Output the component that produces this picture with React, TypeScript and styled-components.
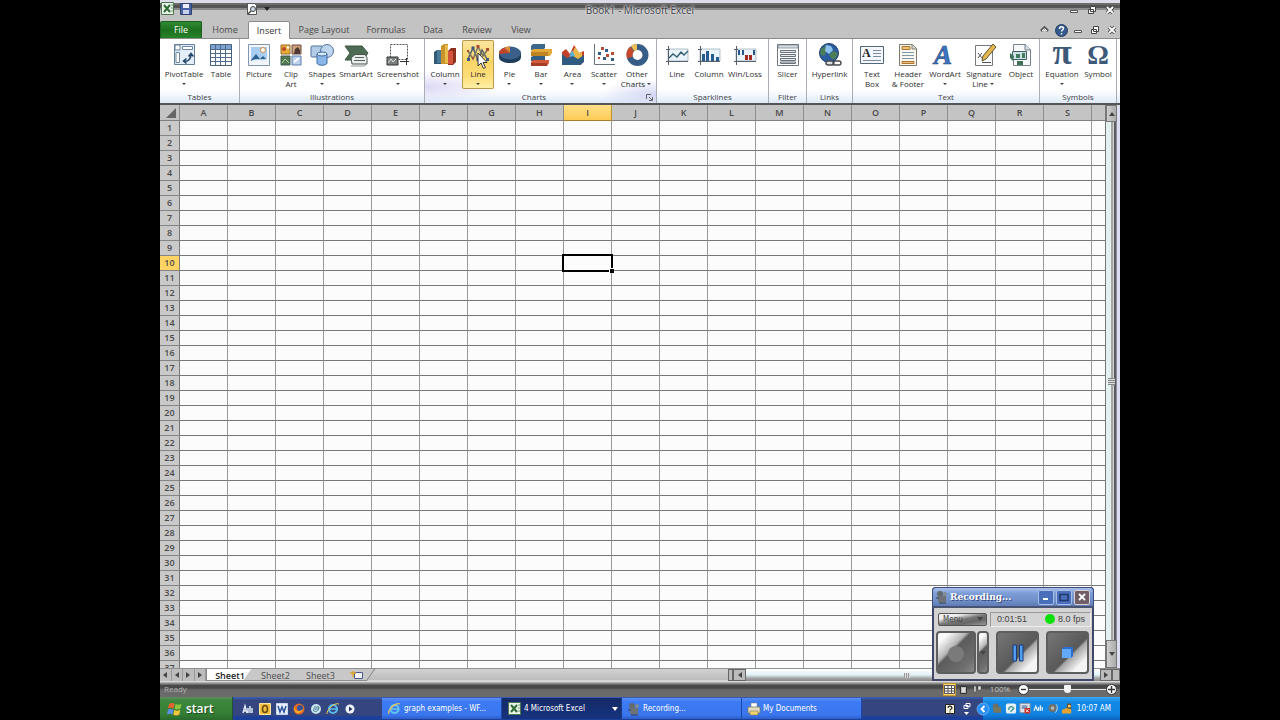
import React from 'react';
import styled, { createGlobalStyle, css } from 'styled-components';

const ui = '"Open Sans", "Noto Sans", sans-serif';
const xp = '"DejaVu Sans Condensed", "DejaVu Sans", sans-serif';

const Global = createGlobalStyle`
  * { box-sizing: border-box; }
  html, body { margin: 0; background: #000; }
  body { font-family: ${ui}; font-size: 8px; line-height: 10px; color: #333; overflow: hidden; }
  button { font: inherit; color: inherit; border: 0; padding: 0; margin: 0; background: none; }
  svg { display: block; flex: none; overflow: visible; }
`;

const Screen = styled.main`
  position: relative;
  display: flex;
  flex-direction: column;
  width: 75%;
  height: 100vh;
  margin: 0 auto;
  background: #c3c3c3;
  overflow: hidden;
`;

/* ---------- title bar ---------- */
const TitleBar = styled.header`
  display: grid;
  grid-template-columns: 1fr auto 1fr;
  align-items: center;
  height: 20px;
  background: linear-gradient(#dcdcea 0 3px, #6c6c6c 3px 5px, #555 5px 8px, #8b8b8b 8px 10px, #c3c3c3 10px);
`;
const QuickTools = styled.div`
  display: flex;
  align-items: center;
  gap: 6px;
  height: 20px;
  padding: 0 1px 3px;
`;
const ToolGap = styled.span`
  width: 42px;
`;
const Title = styled.h1`
  margin: 0;
  font-size: 10px;
  line-height: 14px;
  font-weight: 400;
  color: #3f3f49;
  text-shadow: 0 0 2px #ddd, 0 0 2px #ddd, 0 0 3px #ccc;
`;
const WindowButtons = styled.div`
  display: flex;
  justify-content: flex-end;
  align-items: center;
  gap: 6px;
  padding-right: 4px;
`;
const GlyphButton = styled.button`
  display: grid;
  place-items: center;
  width: 12px;
  height: 12px;
`;

/* ---------- ribbon ---------- */
const TabBar = styled.nav`
  display: flex;
  align-items: flex-end;
  height: 19px;
  border-bottom: 1px solid #8c8c8c;
`;
const RibbonTab = styled.button<{ $w: number; $kind?: 'file' | 'active' }>`
  width: ${p => p.$w}px;
  height: 17px;
  font-size: 9px;
  line-height: 17px;
  text-align: center;
  color: #4a4a4a;
  ${p => p.$kind === 'file' && css`
    color: #fff;
    background: linear-gradient(#2f8a33, #1c701f 50%, #278429);
    border: 1px solid #1b5e1e;
    border-bottom: 0;
    border-radius: 2px 2px 0 0;
    line-height: 16px;
  `}
  ${p => p.$kind === 'active' && css`
    height: 18px;
    margin-bottom: -1px;
    color: #333;
    background: #fff;
    border: 1px solid #8c8c8c;
    border-bottom: 0;
    border-radius: 2px 2px 0 0;
  `}
`;
const TabTools = styled.div`
  display: flex;
  align-items: center;
  gap: 5px;
  height: 17px;
  margin-left: auto;
  padding-right: 2px;
`;
const Ribbon = styled.section`
  display: flex;
  height: 66px;
  background: linear-gradient(#fff 0 50px, #f3f7fd 56px, #dfebf8 63px);
  border-bottom: 2px solid #555;
`;
const Group = styled.section<{ $w: number; $glow?: boolean }>`
  position: relative;
  display: flex;
  flex-direction: column;
  flex: none;
  width: ${p => p.$w}px;
  border-right: 1px solid #a9adb5;
  ${p => p.$glow && css`
    background:
      radial-gradient(ellipse 75px 16px at 0 48px, #dcd8f5, transparent),
      radial-gradient(ellipse 55px 16px at 100% 56px, #d3d6f4, transparent);
  `}
`;
const GroupButtons = styled.div<{ $pad?: number }>`
  display: flex;
  height: 53px;
  padding: 1px 0 0 ${p => p.$pad ?? 1}px;
`;
const GroupName = styled.h2<{ $launcher?: boolean }>`
  margin: 0;
  padding-right: ${p => (p.$launcher ? '13px' : '0')};
  font-size: 8px;
  line-height: 10px;
  font-weight: 400;
  text-align: center;
  color: #444;
`;
const Launcher = styled.button`
  position: absolute;
  right: 3px;
  bottom: 2px;
  width: 7px;
  height: 7px;
`;
const Tool = styled.button<{ $w: number; $hot?: boolean }>`
  position: relative;
  display: flex;
  flex-direction: column;
  align-items: center;
  flex: none;
  width: ${p => p.$w}px;
  height: 49px;
  padding-top: 3px;
  white-space: nowrap;
  border-radius: 2px;
  ${p => p.$hot && css`
    background: linear-gradient(#fbe6a2, #fbd566 45%, #fdde7c 75%, #fdf0a8);
    box-shadow: inset 0 0 0 1px #b99a4c;
  `}
`;
const ToolLabel = styled.span`
  display: block;
  padding-top: 2px;
  line-height: 10px;
  text-align: center;
  color: #2e2e2e;
`;
const Caret = styled.i`
  display: inline-block;
  width: 0;
  height: 0;
  margin: 2px 2px;
  border: 2px solid transparent;
  border-top-color: #444;
  border-bottom: 0;
`;
const Cursor = styled.svg`
  position: absolute;
  left: 15px;
  top: 12px;
`;

/* ---------- grid ---------- */
const Workspace = styled.div`
  display: flex;
  flex: 1;
  min-height: 0;
`;
const GridArea = styled.div`
  flex: 1;
  min-width: 0;
  overflow: hidden;
  background: #fcfcfc;
`;
const Sheet = styled.table`
  width: 100%;
  table-layout: fixed;
  border-collapse: separate;
  border-spacing: 0;
`;
const ColHead = styled.th<{ $on?: boolean; $first?: boolean }>`
  width: ${p => (p.$first ? '20px' : '48px')};
  height: 16px;
  padding: 0;
  font-size: 9px;
  line-height: 15px;
  font-weight: 600;
  color: #4a4a4a;
  background: ${p => (p.$on ? 'linear-gradient(#ffe08a, #fdcb55)' : '#c4c4c4')};
  border-right: 1px solid ${p => (p.$on ? '#c09236' : '#8e8e8e')};
  border-bottom: 1px solid ${p => (p.$on ? '#a87e2c' : '#808080')};
  &:last-child { width: auto; border-right: 0; }
`;
const RowHead = styled.th<{ $on?: boolean }>`
  height: 15px;
  padding: 0;
  font-size: 9px;
  line-height: 14px;
  font-weight: 600;
  color: #4a4a4a;
  background: ${p => (p.$on ? '#ffd465' : '#c9c9c9')};
  border-right: 1px solid #777;
  border-bottom: 1px solid #858585;
`;
const Cell = styled.td`
  position: relative;
  height: 15px;
  padding: 0;
  border-right: 1px solid #999;
  border-bottom: 1px solid #777;
  &:last-child { border-right: 0; }
`;
const Selection = styled.div`
  position: absolute;
  inset: -2px;
  z-index: 1;
  border: 2px solid #000;
  &::after {
    content: '';
    position: absolute;
    right: -3px;
    bottom: -3px;
    width: 4px;
    height: 4px;
    background: #000;
    box-shadow: -1px -1px 0 #fff;
  }
`;
const VScroll = styled.div`
  display: flex;
  flex-direction: column;
  align-items: stretch;
  flex: none;
  width: 15px;
  border-left: 1px solid #777;
  background: linear-gradient(90deg, #e4f1f1 0 5px, #a5a5a5 5px 7px, #d0d0d0 7px 8px, #5b5b62 8px 10px, #8e8e9a 10px 11px, #dcdcf0 11px);
`;
const VArrow = styled.button<{ $h: number }>`
  display: grid;
  place-items: center;
  width: 11px;
  height: ${p => p.$h}px;
  background: linear-gradient(90deg, #cfcfcf, #aaa);
  border: 1px solid #777;
`;
const Grip = styled.span`
  width: 7px;
  height: 7px;
  margin: auto auto auto 2px;
  background: repeating-linear-gradient(#888 0 1px, #ddd 1px 2px);
`;

/* ---------- sheet tabs ---------- */
const SheetBar = styled.div`
  display: flex;
  flex: none;
  height: 15px;
  border-top: 1px solid #909090;
  background: linear-gradient(#d2d2d2, #bcbcbc 11px, #eee 12px, #999 14px);
`;
const SheetNav = styled.div`
  display: flex;
  z-index: 1;
  width: 47px;
  height: 12px;
  background: #bdbdbd;
  border-right: 1px solid #888;
`;
const NavButton = styled.button`
  display: grid;
  place-items: center;
  flex: 1;
  border-right: 1px solid #999;
`;
const SheetTab = styled.button<{ $on?: boolean; $w: number }>`
  position: relative;
  isolation: isolate;
  width: ${p => p.$w}px;
  height: 12px;
  font-size: 9px;
  line-height: 11px;
  font-weight: ${p => (p.$on ? 600 : 400)};
  color: ${p => (p.$on ? '#222' : '#4c4c4c')};
  &::before {
    content: '';
    position: absolute;
    inset: 0 0 0 -6px;
    z-index: -1;
    transform: skewX(-35deg);
    background: ${p => (p.$on ? '#fff' : '#c8c8c8')};
    border-right: 1px solid #808080;
    border-bottom: 1px solid #909090;
  }
`;
const HScroll = styled.div`
  display: flex;
  width: 392px;
  height: 12px;
  margin-left: auto;
`;
const HThumb = styled.div`
  display: grid;
  place-items: center;
  flex: 1;
  background: linear-gradient(#fff, #e0f0f4 6px, #a8a8a8 9px, #888);
`;
const HGrip = styled.span`
  width: 6px;
  height: 5px;
  margin-right: 32px;
  background: repeating-linear-gradient(90deg, #999 0 1px, #ddd 1px 2px);
`;
const HArrow = styled.button<{ $w: number }>`
  display: grid;
  place-items: center;
  width: ${p => p.$w}px;
  background: #bbb;
  border: 1px solid #666;
`;

/* ---------- status bar ---------- */
const StatusBar = styled.footer`
  display: flex;
  align-items: center;
  flex: none;
  height: 14px;
  padding: 0 3px 2px 4px;
  color: #c0c0c0;
  background: linear-gradient(#8a8a8a 0 1px, #484848 2px 5px, #6a6a6a 7px);
`;
const ReadyText = styled.span`
  color: #b0b0b0;
`;
const ViewButtons = styled.div`
  display: flex;
  gap: 1px;
  margin-left: auto;
`;
const ViewButton = styled.button<{ $on?: boolean }>`
  display: grid;
  place-items: center;
  width: 13px;
  height: 13px;
  background: ${p => (p.$on ? '#ffd76a' : 'transparent')};
  border: ${p => (p.$on ? '1px solid #c49a3a' : '0')};
`;
const ZoomText = styled.span`
  width: 26px;
  margin: 0 5px 0 3px;
  text-align: center;
`;
const RoundButton = styled.button`
  display: grid;
  place-items: center;
  width: 11px;
  height: 11px;
  border: 1px solid #333;
  border-radius: 50%;
  background: #fff;
`;
const ZoomRange = styled.input`
  appearance: none;
  width: 77px;
  height: 11px;
  margin: 0;
  background: linear-gradient(transparent 5px, #e4e4e4 5px 6px, transparent 6px);
  &::-webkit-slider-thumb {
    appearance: none;
    width: 7px;
    height: 8px;
    background: #f4f4f4;
    border-radius: 1px 1px 4px 4px;
  }
`;

/* ---------- recorder ---------- */
const Recorder = styled.aside`
  position: absolute;
  right: 26px;
  bottom: 39px;
  z-index: 2;
  width: 162px;
  height: 94px;
  display: flex;
  flex-direction: column;
  background: #d3d3d3;
  border: 2px solid #3f4668;
  border-top: 0;
  border-radius: 4px 4px 0 0;
`;
const RecTitle = styled.header`
  display: flex;
  align-items: center;
  gap: 2px;
  height: 21px;
  padding: 0 3px;
  border: 1px solid #3d4c7c;
  border-bottom: 2px solid #495472;
  border-radius: 4px 4px 0 0;
  margin: 0 -2px;
  background: linear-gradient(#a9c0ea, #7c9cd6 30%, #7493cc 60%, #5f7cb6);
`;
const RecName = styled.h2`
  flex: 1;
  margin: 0;
  font: 700 9px/14px "DejaVu Serif", serif;
  color: #fff;
  text-shadow: 1px 1px 0 #37497e;
`;
const RecBox = styled.button<{ $close?: boolean }>`
  display: grid;
  place-items: center;
  width: 16px;
  height: 15px;
  background: ${p => (p.$close ? '#705d66' : '#496fba')};
  border: 1px solid ${p => (p.$close ? '#d8d0d8' : '#a8bfe8')};
  border-radius: 2px;
`;
const RecInfo = styled.div`
  display: flex;
  align-items: center;
  gap: 3px;
  height: 22px;
  padding: 0 1px 0 4px;
`;
const MenuButton = styled.button`
  display: flex;
  align-items: center;
  justify-content: space-between;
  width: 49px;
  height: 13px;
  padding: 0 3px 0 4px;
  font: 8px/11px ${xp};
  color: #444;
  background: linear-gradient(168deg, #eee 25%, #777 50%, #666 70%, #999);
  border: 1px solid #555;
  border-radius: 2px;
`;
const RecReadout = styled.div`
  display: flex;
  align-items: center;
  gap: 3px;
  flex: 1;
  height: 15px;
  padding: 0 5px 0 6px;
  font: 9px/13px "Liberation Sans", sans-serif;
  color: #444;
  border: 1px solid #999;
  border-right-color: #eee;
  border-bottom-color: #eee;
`;
const Lamp = styled.i`
  width: 10px;
  height: 10px;
  margin-left: auto;
  border-radius: 50%;
  background: #0be00b;
`;
const RecKeys = styled.div`
  display: flex;
  flex: 1;
  gap: 7px;
  padding: 1px 3px 5px 2px;
`;
const RecPair = styled.div`
  display: flex;
  gap: 1px;
  width: 53px;
`;
const RecKey = styled.button<{ $grow?: boolean; $flip?: boolean }>`
  display: grid;
  place-items: center;
  flex: ${p => (p.$grow ? '1' : '0 0 12px')};
  background: ${p => p.$flip
    ? 'linear-gradient(135deg, #777, #585858 56%, #a5a5a5 60%, #f4f4f4 82%)'
    : 'linear-gradient(135deg, #fafafa 14%, #b5b5b5 38%, #5c5c5c 44%, #6e6e6e 80%, #8a8a8a)'};
  border: 2px solid #5e5e5e;
  border-radius: 4px;
`;

/* ---------- taskbar ---------- */
const Taskbar = styled.nav`
  display: flex;
  flex: none;
  height: 23px;
  font: 8px/18px ${xp};
  color: #fff;
  background: linear-gradient(#3b5cae 0 1px, #34457f 3px 18px, #1d3f9c 20px);
`;
const StartButton = styled.button`
  display: flex;
  align-items: center;
  gap: 4px;
  width: 73px;
  height: 23px;
  padding-left: 8px;
  font: 600 12px/20px ${ui};
  color: #fff;
  text-shadow: 1px 1px 1px #1c4a1c;
  background: linear-gradient(#5d8e5d, #3c853c 4px, #368036 16px, #2a6a2c);
  border-right: 1px solid #234f3a;
`;
const QuickLaunch = styled.div`
  display: flex;
  align-items: center;
  gap: 5px;
  width: 149px;
  padding-left: 9px;
`;
const Launch = styled.button`
  width: 12px;
  height: 12px;
`;
const Task = styled.button<{ $on?: boolean }>`
  display: flex;
  align-items: center;
  gap: 3px;
  flex: 0 1 120px;
  height: 21px;
  margin-top: 1px;
  padding: 0 3px 0 6px;
  white-space: nowrap;
  background: ${p => (p.$on ? 'linear-gradient(#152a66, #17337f)' : 'linear-gradient(#5b8ef8, #3c7bf4 4px, #3a76ee 17px, #2b5dc8)')};
  border-right: 1px solid ${p => (p.$on ? '#1c3a86' : '#1f48ab')};
`;
const TaskEnd = styled.span`
  margin-left: auto;
`;
const DeskTools = styled.div`
  display: flex;
  align-items: center;
  gap: 8px;
  margin-left: auto;
  padding-right: 12px;
`;
const Tray = styled.div`
  display: flex;
  align-items: center;
  gap: 2px;
  width: 137px;
  padding-right: 9px;
  background: linear-gradient(#3aa6f2, #1389e6 5px, #1184e2 17px, #0d62bd);
`;
const TrayToggle = styled.button`
  width: 12px;
  height: 14px;
  margin-left: -6px;
`;
const Clock = styled.time`
  margin-left: auto;
  white-space: nowrap;
`;

/* ---------- icons ---------- */
const frame = { width: 24, height: 24, viewBox: '0 0 24 24' };
const navy = '#3c5a78';

const art: Record<string, React.ReactNode> = {
  pivot: <><path d="M2.500 1.500h20v20h-20z" fill="#e4eef8" stroke="#65809a" /><path d="M3 2h5v5H3z" fill="#fff" stroke="#65809a" /><path d="M10.500 3.500h10v3h-10zM4 9.500h3.500v10H4z" fill="#fff" stroke="#6f879e" /><path d="M12 18c4 1 7-2 7-7m-2.500 2.500L19 10.500l2.500 3M14.500 15.500L11.500 18l3 2.500" stroke="#27486d" strokeWidth="1.600" fill="none" /></>,
  table: <><path d="M1.500 1.500h21v21h-21z" fill="#fff" stroke="#46607c" /><path d="M2 2h20v4H2z" fill="#7da2cf" /><path d="M2 6.500h20M2 10.500h20M2 14.500h20M2 18.500h20M6.500 2v20M11.500 2v20M16.500 2v20" stroke="#526b88" /></>,
  picture: <><path d="M1.500 1.500h21v21h-21z" fill="#f3f7fb" stroke="#8197ad" /><path d="M4 4h16v15H4z" fill="#a9cdf0" /><path d="M4 17l5-6 4 5 3-3 4 4v2H4z" fill="#2e6192" /><path d="M4 18c5-3 9-1 16-2v3H4z" fill="#e8f2fa" /><circle cx="16" cy="7" r="2.500" fill="#fff" stroke="#d58a3c" /></>,
  clip: <><path d="M2 2h9v9H2z" fill="#e8ad38" stroke="#9a6b23" /><circle cx="5" cy="6" r="2" fill="#b94628" /><circle cx="9" cy="4.500" r="1.300" fill="#fff" /><path d="M13 2h9v9h-9z" fill="#cfa17b" stroke="#6b4a38" /><path d="M15 11l1-5 3-2 2 3v4z" fill="#4d3a36" /><path d="M2 13h9v9H2z" fill="#4f7850" stroke="#3c5a52" /><path d="M3 20l3-4 4 4" stroke="#b8d0a8" fill="none" /><path d="M13 13h9v9h-9z" fill="#b8d2f0" stroke="#5e7fa5" /><path d="M15 19l5-4" stroke="#fff" strokeWidth="2" /></>,
  shapes: <><rect x="1" y="3" width="12" height="11" rx="1" fill="#b2cce8" stroke="#51739b" /><circle cx="17" cy="8" r="6.500" fill="#bed5ef" stroke="#51739b" /><path d="M7 11v9c0 3 10 3 10 0v-9" fill="#8bb7e8" stroke="#3e6a9c" /><ellipse cx="12" cy="11" rx="5" ry="2" fill="#d8e9fa" stroke="#3e6a9c" /></>,
  smart: <><path d="M1 3h17l6 7-5 7H1l5-7z" fill="#4c6b52" stroke="#3a5540" /><path d="M7 15l4-3.500h10l2 3V21H8z" fill="#e8ecec" stroke="#46564c" /><path d="M11 14.500h9M10 17.500h11" stroke="#56635b" /><path d="M7 23h13l3-2" stroke="#8c9690" fill="none" /></>,
  shot: <><path d="M4.500 1.500h17v15h-17z" fill="none" stroke="#555" strokeDasharray="2 1" /><path d="M1 14h11v8H1z" fill="#7b807d" stroke="#333" /><path d="M2 20l3-4 2 3 3-3" stroke="#dfe5df" fill="none" /><path d="M14 18.500h9M20.500 15v7" stroke="#333" /></>,
  column: <><path d="M1 9l3-2h4v14H1z" fill="#315a79" /><path d="M4 7h4v13H4z" fill="#4b7a99" /><path d="M8 3l3-2h4v20H8z" fill="#c9952b" /><path d="M12 2h3v18h-3z" fill="#e8bc4e" /><path d="M15 8l3-3h5v14l-3 3h-5z" fill="#8f2f1d" /><path d="M15 8h5v13h-5z" fill="#d2543a" /></>,
  line: <><path d="M2 16l5-11 5 12 4-10 6 11" stroke="#54606d" strokeWidth="1.500" fill="none" /><path d="M2 8l5 8 5-12 5 9 5-7" stroke="#7a7563" strokeWidth="1.500" fill="none" /><path d="M1 15h3v3H1zM5.500 3.500h3v3h-3zM10.500 15h3v3h-3zM20 15h3v3h-3z" fill="#3c5b7d" /><path d="M1 7h2v2H1zM10.500 2h3v3h-3zM20 5h3v3h-3zM6 14h2v2H6z" fill="#a94c33" /></>,
  pie: <><path d="M1 10v4c0 8 22 8 22 0v-4z" fill="#1f3d5c" /><ellipse cx="12" cy="10" rx="11" ry="6.500" fill="#395f8a" /><path d="M12 10L1 11c-.5-3 2-5 6-6.500z" fill="#c34527" /><path d="M12 10L6 4.600c2-.8 4-1.100 6-1.100z" fill="#d98a3a" /></>,
  bar: <><path d="M2 3l2-2h12v4l-2 2H2z" fill="#3c668b" /><path d="M2 8l2-2h19v4l-2 3H2z" fill="#e0a93a" /><path d="M2 9h17v4H2z" fill="#bd8424" /><path d="M2 14l2-1h12v4l-2 1H2z" fill="#345e83" /><path d="M2 19l2-2h16v3l-2 3H2z" fill="#d45a3c" /><path d="M2 20h16v3H2z" fill="#a83d25" /></>,
  area: <><path d="M1 20V9l4-3 4 5 4-9 5 8 5-2v10l-3 4z" fill="#c5402a" /><path d="M9 16l5-12 4 6 3-1v8z" fill="#e9b848" /><path d="M8 14l3-7 3 6z" fill="#5bb2d8" /><path d="M1 11l5 4 6-2 5 3 6-4v7l-4 3H1z" fill="#2f5a82" /></>,
  scatter: <><path d="M2.500 1v20.500H23" stroke="#67727e" fill="none" /><path d="M6 9h3v3H6zM13 6h3v3h-3zM11 14h3v3h-3zM19 15h3v3h-3z" fill="#375b87" /><path d="M9 4h3v3H9zM19 9h3v3h-3zM6 14h2v2H6zM14 11h3v3h-3z" fill="#bd4c37" /></>,
  donut: <><circle cx="12.500" cy="12" r="8" fill="none" stroke="#365c88" strokeWidth="6" /><path d="M5 14.500A8 8 0 0 1 7 6" stroke="#c9482c" strokeWidth="6" fill="none" /><path d="M7.500 5.500a8 8 0 0 1 4.500-1.500" stroke="#edc052" strokeWidth="6" fill="none" /></>,
  sline: <><path d="M3 6h20v12H3z" fill="#e9f3fa" stroke="#98a6b2" strokeWidth=".7" /><path d="M3.500 3v19M1 18.500h22M1 6.500h4" stroke="#56616d" /><path d="M4 15l4-4 4 3 4-5 3 3 4-4" stroke="#365f73" strokeWidth="1.400" fill="none" /></>,
  scol: <><path d="M3 6h20v12H3z" fill="#e9f3fa" stroke="#98a6b2" strokeWidth=".7" /><path d="M3.500 3v19M1 18.500h22M1 6.500h4" stroke="#56616d" /><path d="M5 11h3v7H5zM9 8h3v10H9zM14 11h3v7h-3zM19 14h3v4h-3z" fill="#275b91" /></>,
  winloss: <><path d="M3 6h20v12H3z" fill="#e9f3fa" stroke="#98a6b2" strokeWidth=".7" /><path d="M3.500 3v19M1 18.500h22M1 6.500h4" stroke="#56616d" /><path d="M5 7h2v5H5zM9 7h2v5H9zM20 7h2v5h-2z" fill="#2b5689" /><path d="M12 12h3v5h-3zM16 12h3v5h-3z" fill="#a62820" /></>,
  slicer: <><path d="M1.500 1.500h21v21h-21z" fill="#fff" stroke="#707982" /><path d="M2 2h20v3H2z" fill="#d8dee4" stroke="#707982" strokeWidth=".7" /><path d="M4.500 7.500h15v2h-15zM4.500 11.500h15v2h-15zM4.500 15.500h15v2h-15zM4.500 19h15v1.500h-15z" fill="#e9edf2" stroke="#66717b" /></>,
  link: <><circle cx="11" cy="10" r="9.500" fill="#2b5ca0" stroke="#1d3e68" /><path d="M3 6l6-4 3 2-3 4-3 5-4-2zM11 12l4-4 5 2-3 6h-3z" fill="#4c7f55" /><path d="M8 2l5 1 2 4-4 4-4-3z" fill="#8dc2ee" /><rect x="8" y="18" width="8" height="4" rx="2" fill="#ddd" stroke="#454b50" strokeWidth="1.400" /><rect x="15" y="18" width="8" height="4" rx="2" fill="none" stroke="#454b50" strokeWidth="1.400" /></>,
  textbox: <><path d="M.5 3.500h23v17H.5z" fill="#f4f8fc" stroke="#50677e" /><text x="2" y="14" fontSize="12" fontFamily="Liberation Serif" fontWeight="700" fill="#222">A</text><path d="M13 7.500h8M13 10.500h8M13 13.500h8M3 17.500h18" stroke="#7b8ca0" /></>,
  header: <><path d="M3.500 1.500h13l4 4v17h-17z" fill="#fbf8ef" stroke="#7f7a6c" /><path d="M6 3.500h8v3H6zM6 18.500h12v2H6z" fill="#f0bf72" stroke="#ab7734" /><path d="M16 1v5h4" fill="#ddd" stroke="#7f7a6c" /><path d="M6 9.500h12M6 12.500h12M6 15.500h12" stroke="#7e99ac" /></>,
  wordart: <text x="1" y="21" fontSize="27" fontFamily="Liberation Serif" fontStyle="italic" fontWeight="700" fill="#3c75c5" stroke="#244875" strokeWidth=".6">A</text>,
  sign: <><path d="M3.500 2.500h17v20h-17z" fill="#fdfdfd" stroke="#74797e" /><path d="M6 10l4 5M6 15l4-5M10 19.500h9" stroke="#555" /><path d="M21 1l3 3-10 12-4 2 1-5z" fill="#e5b84d" stroke="#5f5436" /></>,
  object: <><path d="M4.500 1.500h12l5 5v16h-17z" fill="#f6f8fa" stroke="#78828c" /><path d="M16 1v6h6" fill="#d5dde5" stroke="#78828c" /><path d="M3.500 8.500h14v8h-14z" fill="#cfe0e6" stroke="#3e5e62" /><path d="M7 11h4v4H7zM13 10h3v5h-3z" fill="#3f7a5a" /><path d="M1 10l4 3-1 5-3-3zM8 18h6v4H8z" fill="#3d7259" /></>,
  pi: <text x="12" y="21" textAnchor="middle" fontSize="35" fontFamily="Liberation Serif" fontWeight="700" fill={navy}>π</text>,
  omega: <text x="12" y="21" textAnchor="middle" fontSize="27" fontFamily="Liberation Serif" fontWeight="700" fill={navy}>Ω</text>,
};

type ToolSpec = { icon: string; top: string; bottom?: string; caret?: boolean; w: number; hot?: boolean };
type GroupSpec = { name: string; w: number; pad?: number; tools: ToolSpec[] };

const groups: GroupSpec[] = [
  { name: 'Tables', w: 80, pad: 2, tools: [
    { icon: 'pivot', top: 'PivotTable', caret: true, w: 44 },
    { icon: 'table', top: 'Table', w: 30 }] },
  { name: 'Illustrations', w: 185, pad: 2, tools: [
    { icon: 'picture', top: 'Picture', w: 34 },
    { icon: 'clip', top: 'Clip', bottom: 'Art', w: 30 },
    { icon: 'shapes', top: 'Shapes', caret: true, w: 32 },
    { icon: 'smart', top: 'SmartArt', w: 36 },
    { icon: 'shot', top: 'Screenshot', caret: true, w: 48 }] },
  { name: 'Charts', w: 232, pad: 3, tools: [
    { icon: 'column', top: 'Column', caret: true, w: 34 },
    { icon: 'line', top: 'Line', caret: true, w: 32, hot: true },
    { icon: 'pie', top: 'Pie', caret: true, w: 31 },
    { icon: 'bar', top: 'Bar', caret: true, w: 32 },
    { icon: 'area', top: 'Area', caret: true, w: 31 },
    { icon: 'scatter', top: 'Scatter', caret: true, w: 32 },
    { icon: 'donut', top: 'Other', bottom: 'Charts', caret: true, w: 34 }] },
  { name: 'Sparklines', w: 112, pad: 4, tools: [
    { icon: 'sline', top: 'Line', w: 32 },
    { icon: 'scol', top: 'Column', w: 32 },
    { icon: 'winloss', top: 'Win/Loss', w: 40 }] },
  { name: 'Filter', w: 38, pad: 0, tools: [{ icon: 'slicer', top: 'Slicer', w: 37 }] },
  { name: 'Links', w: 46, pad: 0, tools: [{ icon: 'link', top: 'Hyperlink', w: 45 }] },
  { name: 'Text', w: 187, pad: 3, tools: [
    { icon: 'textbox', top: 'Text', bottom: 'Box', w: 32 },
    { icon: 'header', top: 'Header', bottom: '& Footer', w: 40 },
    { icon: 'wordart', top: 'WordArt', caret: true, w: 34 },
    { icon: 'sign', top: 'Signature', bottom: 'Line', caret: true, w: 44 },
    { icon: 'object', top: 'Object', w: 30 }] },
  { name: 'Symbols', w: 77, pad: 2, tools: [
    { icon: 'pi', top: 'Equation', caret: true, w: 40 },
    { icon: 'omega', top: 'Symbol', w: 32 }] },
];

const MinGlyph = () => <svg width="10" height="10" viewBox="0 0 10 10"><path d="M1.500 5.500h7v2h-7z" fill="#fff" stroke="#555" /></svg>;
const RestoreGlyph = () => <svg width="10" height="10" viewBox="0 0 10 10"><path d="M3.500 1.500h5v5h-5zM1.500 4.500h5v4h-5z" fill="#fff" stroke="#444" /></svg>;
const CloseGlyph = ({ edge = '#444' }: { edge?: string }) => (
  <svg width="10" height="10" viewBox="0 0 10 10">
    <path d="M2 2l6 6M8 2L2 8" stroke={edge} strokeWidth="3.500" />
    <path d="M2 2l6 6M8 2L2 8" stroke="#fff" strokeWidth="1.800" />
  </svg>
);
const ExcelGlyph = ({ size = 13 }: { size?: number }) => (
  <svg width={size} height={size} viewBox="0 0 13 13">
    <path d="M.5.500h12v12H.5z" fill="#e9f2e7" stroke="#4c7550" />
    <path d="M3 3l6 7M9 3l-6 7" stroke="#2d6b35" strokeWidth="2" /><path d="M10 3h2M10 6h2M10 9h2" stroke="#6a9a6a" />
  </svg>
);
const IeGlyph = () => (
  <svg width="13" height="13" viewBox="0 0 13 13">
    <circle cx="6.500" cy="7" r="4" fill="none" stroke="#64c4f0" strokeWidth="2.200" />
    <path d="M4 7h6" stroke="#64c4f0" strokeWidth="1.600" /><path d="M1 12C-1 8 8 0 12 2" fill="none" stroke="#e5c75a" strokeWidth="1.200" />
  </svg>
);
const Tri = ({ d, fill = '#444' }: { d: 'up' | 'down' | 'left' | 'right'; fill?: string }) => {
  const shape = { up: 'M0 5h6L3 1z', down: 'M0 1h6L3 5z', left: 'M5 0v6L1 3z', right: 'M1 0v6l4-3z' }[d];
  return <svg width="6" height="6" viewBox="0 0 6 6"><path d={shape} fill={fill} /></svg>;
};
const CamGlyph = () => (
  <svg width="12" height="14" viewBox="0 0 12 14"><circle cx="4" cy="4" r="3" fill="#636a70" /><circle cx="9" cy="4" r="2" fill="#848b92" /><path d="M2 6h8v6H2z" fill="#6d7278" /><path d="M3 13h7M0 8h3" stroke="#3b4047" /></svg>
);

const launchers = [
  { name: 'Show desktop', art: <path d="M1 10l2-7 2 7M2 8h3M6 10V5M8 10V3m2 7V5" stroke="#dce6f4" strokeWidth="1.500" fill="none" /> },
  { name: 'Outlook', art: <><path d="M.5.500h11v11H.5z" fill="#f4c040" stroke="#fbe6a0" /><ellipse cx="6" cy="6" rx="2.500" ry="3.500" fill="none" stroke="#6d4a12" strokeWidth="1.600" /></> },
  { name: 'Word', art: <><path d="M.5.500h11v11H.5z" fill="#e9f0fb" stroke="#c5d5ee" /><path d="M2 3l2 6 2-5 2 5 2-6" stroke="#2a4f9b" strokeWidth="1.500" fill="none" /></> },
  { name: 'Firefox', art: <><circle cx="6" cy="6" r="5.500" fill="#e2681f" /><circle cx="7" cy="5" r="3" fill="#33549c" /><path d="M1 3c1 6 6 6 9 3-1 5-8 6-9 0z" fill="#f7a62e" /></> },
  { name: 'Media', art: <><circle cx="6" cy="6" r="5" fill="#c6e2ea" /><path d="M3 7c2 3 6 1 6-3M4 4h5M3 6h6" stroke="#4b7f92" fill="none" /></> },
  { name: 'Internet Explorer', art: <><circle cx="6" cy="6" r="4" fill="none" stroke="#58b8ea" strokeWidth="2.200" /><path d="M3 6h6" stroke="#58b8ea" strokeWidth="1.600" /><path d="M0 11C-1 8 7-1 12 1" fill="none" stroke="#e5c75a" /></> },
  { name: 'Player', art: <><circle cx="6" cy="6" r="4.500" fill="#eef2f8" /><path d="M5 3.500v5L8.500 6z" fill="#26365f" /></> },
];

const trayIcons = [
  { name: 'Recorder', art: <><circle cx="5" cy="4" r="3" fill="#6e6f60" /><path d="M2 5h9v6H3z" fill="#77775f" /></> },
  { name: 'Sync', art: <><rect x="1" y="1" width="11" height="11" rx="2" fill="#e6f1f1" /><path d="M4 8c0-4 5-5 5-1M6 10l4-4" stroke="#3c8f96" fill="none" strokeWidth="1.400" /></> },
  { name: 'Network', art: <><path d="M1 1h11v10H1z" fill="#e1e3ea" stroke="#8d94a6" /><path d="M3 3h6v4H3z" fill="#7e94b8" /><path d="M6 6h6v6H6z" fill="#c92c22" /><path d="M7.500 7.500l3 3m0-3l-3 3" stroke="#fff" /></> },
  { name: 'Audio', art: <path d="M1 9l2-5 2 5M6 9V5M8 9V3m2 6V5" stroke="#e2edf8" strokeWidth="1.400" fill="none" /> },
  { name: 'Volume', art: <><circle cx="6" cy="6" r="4.500" fill="#6c706d" /><circle cx="6" cy="6" r="2" fill="#b0b4aa" /><path d="M10 2c2 3 1 7-1 9" stroke="#ddd" fill="none" /></> },
  { name: 'Security', art: <><path d="M1 8l5-2 5 1v5H1z" fill="#e5a32c" /><path d="M6 6l1-5h4v6z" fill="#6b4b21" /><circle cx="9" cy="4" r="1.500" fill="#f0cd70" /></> },
];

const columns = 'ABCDEFGHIJKLMNOPQRST'.split('');
const rows = Array.from({ length: 37 }, (_, i) => i + 1);

const RibbonTool = ({ t }: { t: ToolSpec }) => (
  <Tool $w={t.w} $hot={t.hot}>
    <svg {...frame} aria-hidden="true">{art[t.icon]}</svg>
    <ToolLabel>
      {t.top}<br />{t.bottom}{t.caret && <Caret />}
    </ToolLabel>
    {t.hot && (
      <Cursor width="11" height="18" viewBox="0 0 11 18" aria-hidden="true">
        <path d="M1 1v13l3-3 2.500 5.500 2-1L6 10.500h4z" fill="#fff" stroke="#333" />
      </Cursor>
    )}
  </Tool>
);

export default function App() {
  return (
    <>
      <Global />
      <Screen>
        <TitleBar>
          <QuickTools>
            <ExcelGlyph />
            <GlyphButton aria-label="Save">
              <svg width="12" height="12" viewBox="0 0 12 12"><path d="M.5.500h11v11H.5z" fill="#4a62a6" stroke="#2f3f70" /><path d="M3 1h6v4H3z" fill="#eef" /><path d="M3 7h6v4H3z" fill="#c7d2ea" /></svg>
            </GlyphButton>
            <ToolGap />
            <GlyphButton aria-label="Print preview">
              <svg width="12" height="12" viewBox="0 0 12 12"><path d="M1.500.500h7l2 2v9h-9z" fill="#fff" stroke="#555" /><circle cx="7" cy="6" r="2.500" fill="#c9d6e4" stroke="#444" /><path d="M5 8l-3 3" stroke="#444" strokeWidth="1.500" /></svg>
            </GlyphButton>
            <Tri d="down" fill="#222" />
          </QuickTools>
          <Title>Book1 - Microsoft Excel</Title>
          <WindowButtons>
            <GlyphButton aria-label="Minimize"><MinGlyph /></GlyphButton>
            <GlyphButton aria-label="Restore"><RestoreGlyph /></GlyphButton>
            <GlyphButton aria-label="Close"><CloseGlyph /></GlyphButton>
          </WindowButtons>
        </TitleBar>

        <TabBar>
          <RibbonTab $w={42} $kind="file">File</RibbonTab>
          <RibbonTab $w={46}>Home</RibbonTab>
          <RibbonTab $w={42} $kind="active">Insert</RibbonTab>
          <RibbonTab $w={68}>Page Layout</RibbonTab>
          <RibbonTab $w={56}>Formulas</RibbonTab>
          <RibbonTab $w={38}>Data</RibbonTab>
          <RibbonTab $w={50}>Review</RibbonTab>
          <RibbonTab $w={38}>View</RibbonTab>
          <TabTools>
            <GlyphButton aria-label="Collapse ribbon">
              <svg width="9" height="9" viewBox="0 0 9 9"><path d="M1 6l3.500-3.500L8 6" stroke="#555" strokeWidth="2.500" fill="#fff" /><path d="M2 6l2.500-2.500L7 6" stroke="#fff" fill="none" /></svg>
            </GlyphButton>
            <GlyphButton aria-label="Help">
              <svg width="13" height="13" viewBox="0 0 13 13"><circle cx="6.500" cy="6.500" r="6" fill="#345a8f" stroke="#283f63" /><path d="M4.500 5c0-3 4-3 4-.5 0 1.500-2 1.500-2 3M6.500 9v1.500" stroke="#fff" strokeWidth="1.500" fill="none" /></svg>
            </GlyphButton>
            <GlyphButton aria-label="Minimize workbook"><MinGlyph /></GlyphButton>
            <GlyphButton aria-label="Restore workbook"><RestoreGlyph /></GlyphButton>
            <GlyphButton aria-label="Close workbook"><CloseGlyph /></GlyphButton>
          </TabTools>
        </TabBar>

        <Ribbon>
          {groups.map(g => (
            <Group key={g.name} $w={g.w} $glow={g.name === 'Charts'}>
              <GroupButtons $pad={g.pad}>
                {g.tools.map(t => <RibbonTool key={t.icon} t={t} />)}
              </GroupButtons>
              <GroupName $launcher={g.name === 'Charts'}>{g.name}</GroupName>
              {g.name === 'Charts' && (
                <Launcher aria-label="Chart options">
                  <svg width="7" height="7" viewBox="0 0 7 7"><path d="M.5 5V.5H5M3 3l3 3M6.500 3v3.500H3" stroke="#666" fill="none" /></svg>
                </Launcher>
              )}
            </Group>
          ))}
        </Ribbon>

        <Workspace>
          <GridArea>
            <Sheet>
              <thead>
                <tr>
                  <ColHead $first aria-label="Select all">
                    <svg width="19" height="15" viewBox="0 0 19 15"><path d="M16 3v10H6z" fill="#666" /></svg>
                  </ColHead>
                  {columns.map(c => <ColHead key={c} $on={c === 'I'} scope="col">{c === 'T' ? '' : c}</ColHead>)}
                </tr>
              </thead>
              <tbody>
                {rows.map(r => (
                  <tr key={r}>
                    <RowHead $on={r === 10} scope="row">{r}</RowHead>
                    {columns.map(c => <Cell key={c}>{r === 10 && c === 'I' && <Selection />}</Cell>)}
                  </tr>
                ))}
              </tbody>
            </Sheet>
          </GridArea>
          <VScroll>
            <VArrow $h={17} aria-label="Scroll up"><Tri d="up" /></VArrow>
            <Grip />
            <VArrow $h={28} aria-label="Scroll down"><Tri d="down" /></VArrow>
          </VScroll>
        </Workspace>

        <SheetBar>
          <SheetNav>
            <NavButton aria-label="First sheet"><Tri d="left" /></NavButton>
            <NavButton aria-label="Previous sheet"><Tri d="left" /></NavButton>
            <NavButton aria-label="Next sheet"><Tri d="right" /></NavButton>
            <NavButton aria-label="Last sheet"><Tri d="right" /></NavButton>
          </SheetNav>
          <SheetTab $w={46} $on>Sheet1</SheetTab>
          <SheetTab $w={45}>Sheet2</SheetTab>
          <SheetTab $w={45}>Sheet3</SheetTab>
          <SheetTab $w={28} aria-label="Insert sheet">
            <svg width="28" height="11" viewBox="0 0 28 11"><path d="M11.500 2.500h8v6h-8z" fill="#f4f4f4" stroke="#4a5a8a" /><path d="M7 3h6M10 1v6" stroke="#dba52f" strokeWidth="1.500" /></svg>
          </SheetTab>
          <HScroll>
            <HArrow $w={5} aria-label="Split handle" />
            <HArrow $w={13} aria-label="Scroll left"><Tri d="left" /></HArrow>
            <HThumb><HGrip /></HThumb>
            <HArrow $w={12} aria-label="Scroll right"><Tri d="right" /></HArrow>
            <HArrow $w={8} aria-label="Split columns" />
          </HScroll>
        </SheetBar>

        <StatusBar>
          <ReadyText>Ready</ReadyText>
          <ViewButtons>
            <ViewButton $on aria-label="Normal view">
              <svg width="11" height="9" viewBox="0 0 11 9"><path d="M.5.500h10v8H.5zM.5 3.500h10M.5 6h10M4 .5v8M7.500.500v8" fill="#fff" stroke="#555" /></svg>
            </ViewButton>
            <ViewButton aria-label="Page layout view">
              <svg width="9" height="9" viewBox="0 0 9 9"><path d="M1.500 1.500h6v7h-6z" fill="#bbb" stroke="#333" /><path d="M3 4h3M3 6h3" stroke="#fff" /></svg>
            </ViewButton>
            <ViewButton aria-label="Page break view">
              <svg width="9" height="9" viewBox="0 0 9 9"><path d="M1 1h2v6H1zM5 1h3v4H5z" fill="#ddd" stroke="#444" strokeWidth=".5" /></svg>
            </ViewButton>
          </ViewButtons>
          <ZoomText>100%</ZoomText>
          <RoundButton aria-label="Zoom out"><svg width="7" height="7" viewBox="0 0 7 7"><path d="M1 3.500h5" stroke="#333" strokeWidth="1.400" /></svg></RoundButton>
          <ZoomRange type="range" aria-label="Zoom" min={0} max={100} defaultValue={50} />
          <RoundButton aria-label="Zoom in"><svg width="7" height="7" viewBox="0 0 7 7"><path d="M0 3.500h7M3.500 0v7" stroke="#333" strokeWidth="1.400" /></svg></RoundButton>
        </StatusBar>

        <Taskbar>
          <StartButton>
            <svg width="14" height="14" viewBox="0 0 14 14">
              <path d="M1 2c2-1.500 4-1.200 5.500-.3L5.500 6.500C4 5.500 2 5.500 0 6.500z" fill="#e4632c" />
              <path d="M7.500 2c2 1 4 1 6-.2L12.500 6.500c-2 1.300-4 1.300-6 .3z" fill="#8cc63e" />
              <path d="M0 7.800c2-1.300 4-1 5.500-.1l-1 4.800c-2-1-3.500-1-5.500 0z" fill="#5b90e6" />
              <path d="M6.300 8c2 1 4 1 6-.2l-1 4.700c-2 1.300-4 1.300-6 .2z" fill="#f4c63c" />
            </svg>
            start
          </StartButton>
          <QuickLaunch>
            {launchers.map(l => (
              <Launch key={l.name} aria-label={l.name}><svg width="12" height="12" viewBox="0 0 12 12">{l.art}</svg></Launch>
            ))}
          </QuickLaunch>
          <Task><IeGlyph />graph examples - WF...</Task>
          <Task $on><ExcelGlyph size={13} />4 Microsoft Excel<TaskEnd><Tri d="down" fill="#fff" /></TaskEnd></Task>
          <Task><CamGlyph />Recording...</Task>
          <Task>
            <svg width="12" height="12" viewBox="0 0 12 12"><path d="M3 0h6v5H3z" fill="#fff" stroke="#888" strokeWidth=".6" /><path d="M0 4h12v6H0z" fill="#e2dcc0" stroke="#7d7a66" strokeWidth=".8" /><path d="M2 8h8v4H2z" fill="#f2d46c" stroke="#7d7a66" strokeWidth=".6" /></svg>
            My Documents
          </Task>
          <DeskTools>
            <svg width="10" height="10" viewBox="0 0 10 10"><path d="M.5.500h9v9h-9z" fill="#f7f3dd" stroke="#222" /><path d="M3 4c0-3 4-2 4 0 0 1-2 1-2 2.500M5 7.500v1" stroke="#222" fill="none" strokeWidth="1.200" /></svg>
            <svg width="8" height="14" viewBox="0 0 8 14"><path d="M3 1.500h4v3H3zM1 3.500h4v3H1z" fill="#2f4189" stroke="#fff" /><path d="M1 10h5l-2.500 3z" fill="#fff" /></svg>
          </DeskTools>
          <Tray>
            <TrayToggle aria-label="Show hidden icons">
              <svg width="12" height="14" viewBox="0 0 12 14"><circle cx="6" cy="7" r="6" fill="#2a8df0" stroke="#8cc8fa" strokeWidth=".6" /><path d="M7.500 4L4.500 7l3 3" stroke="#fff" strokeWidth="1.800" fill="none" /></svg>
            </TrayToggle>
            {trayIcons.map(i => (
              <svg key={i.name} role="img" aria-label={i.name} width="12" height="13" viewBox="0 0 13 13">{i.art}</svg>
            ))}
            <Clock>10:07 AM</Clock>
          </Tray>
        </Taskbar>

        <Recorder>
          <RecTitle>
            <CamGlyph />
            <RecName>Recording...</RecName>
            <RecBox aria-label="Minimize recorder"><svg width="8" height="8" viewBox="0 0 8 8"><path d="M1 6h5" stroke="#fff" strokeWidth="2" /></svg></RecBox>
            <RecBox aria-label="Maximize recorder"><svg width="10" height="8" viewBox="0 0 10 8"><path d="M1 1.500h8v6H1z" fill="none" stroke="#22376c" strokeWidth="1.500" /></svg></RecBox>
            <RecBox $close aria-label="Close recorder"><CloseGlyph edge="#705d66" /></RecBox>
          </RecTitle>
          <RecInfo>
            <MenuButton>Menu<Tri d="down" /></MenuButton>
            <RecReadout><span>0:01:51</span><Lamp /><span>8.0 fps</span></RecReadout>
          </RecInfo>
          <RecKeys>
            <RecPair>
              <RecKey $grow aria-label="Record"><svg width="20" height="20" viewBox="0 0 20 20"><circle cx="10" cy="11" r="8" fill="#7a7a7a" /></svg></RecKey>
              <RecKey aria-label="Record options"><Tri d="down" /></RecKey>
            </RecPair>
            <RecKey $grow $flip aria-label="Pause"><svg width="12" height="18" viewBox="0 0 12 18"><path d="M1 1h3.500v16H1zM7.500 1H11v16H7.500z" fill="#4f9df0" stroke="#173b78" /></svg></RecKey>
            <RecKey $grow $flip aria-label="Stop"><svg width="13" height="13" viewBox="0 0 13 13"><path d="M1 3l2-2h9v9l-2 2H1z" fill="#2c6fd0" /><path d="M1 3h9v9H1z" fill="#62aaf6" /></svg></RecKey>
          </RecKeys>
        </Recorder>
      </Screen>
    </>
  );
}
